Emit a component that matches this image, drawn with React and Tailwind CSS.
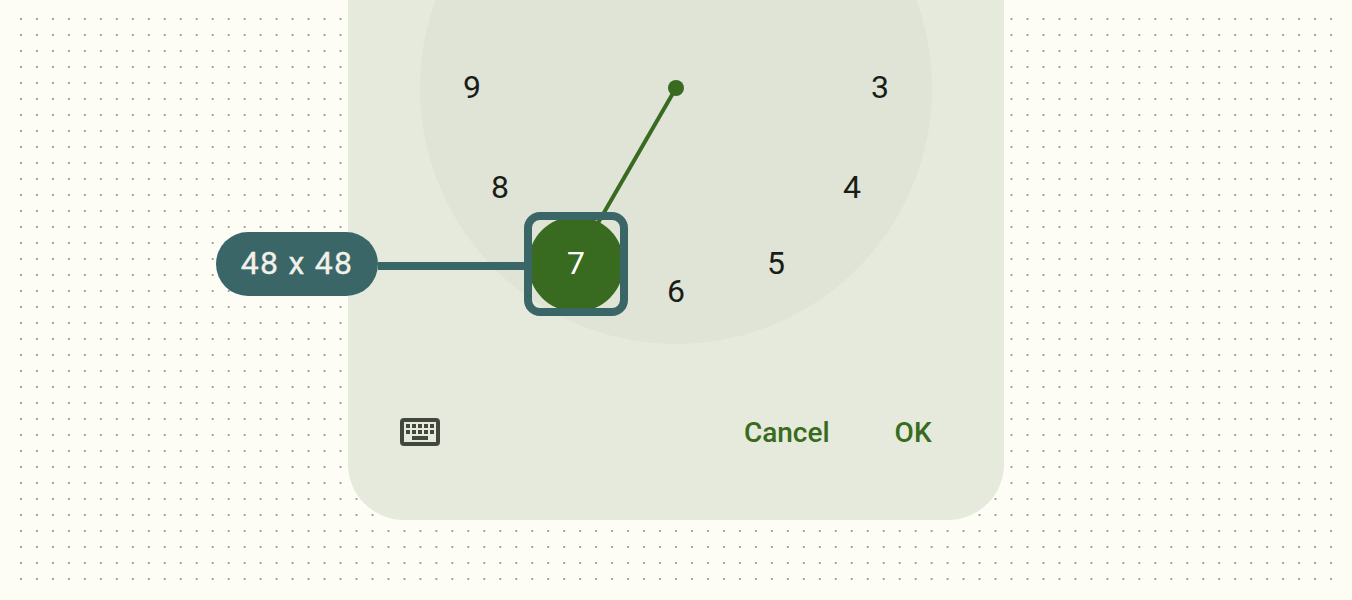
const COLUMNS = Array.from({ length: 83 }, (_, i) => 21 + i * 15.976);
const ROWS = Array.from({ length: 36 }, (_, i) => 19 + i * 16);

const HOURS = [
  { label: '9', place: 'left-[32px] top-[235px]' },
  { label: '8', place: 'left-[60px] top-[335px]' },
  { label: '6', place: 'left-[236px] top-[439px]' },
  { label: '5', place: 'left-[336px] top-[411px]' },
  { label: '4', place: 'left-[412px] top-[335px]' },
  { label: '3', place: 'left-[440px] top-[235px]' },
];

function DotGrid() {
  return (
    <svg className="absolute inset-0" width="1352" height="600" fill="#93948c" aria-hidden="true">
      {ROWS.map((y) => COLUMNS.map((x) => <circle key={`${x}-${y}`} cx={x} cy={y} r="1.08" />))}
    </svg>
  );
}

function Dial() {
  return (
    <div className="relative -mt-[168px] size-[512px] shrink-0 rounded-full bg-[#dfe4d7]">
      {HOURS.map(({ label, place }) => (
        <span
          key={label}
          className={`absolute flex h-10 w-10 items-center justify-center text-[32px] leading-10 text-[#1a1c18] ${place}`}
        >
          {label}
        </span>
      ))}
      <svg className="absolute inset-0" width="512" height="512" aria-hidden="true">
        <path d="M256 256 156 429" stroke="#386a20" strokeWidth="4" />
        <circle cx="256" cy="256" r="8" fill="#386a20" />
      </svg>
      <div className="absolute left-[108px] top-[384px] flex size-[96px] items-center justify-center rounded-full bg-[#386a20] text-[32px] leading-10 text-white">
        <span className="-mt-0.5">7</span>
      </div>
      <div className="absolute left-[104px] top-[380px] size-[104px] rounded-[16px] border-8 border-[#3a6667]" />
    </div>
  );
}

function KeyboardIcon() {
  return (
    <svg width="40" height="28" viewBox="0 0 40 28" fill="#43483e" aria-label="Keyboard">
      <path
        fillRule="evenodd"
        d="M4 0h32a4 4 0 0 1 4 4v20a4 4 0 0 1-4 4H4a4 4 0 0 1-4-4V4a4 4 0 0 1 4-4ZM4 4v20h32V4Z"
      />
      {[6, 12, 18, 24, 30].map((x) => (
        <path key={x} d={`M${x} 6h4v4h-4ZM${x} 12h4v4h-4Z`} />
      ))}
      <path d="M12 18h16v4H12Z" />
    </svg>
  );
}

export default function App() {
  return (
    <main className="relative flex h-[600px] w-[1352px] justify-center overflow-hidden bg-[#fdfdf5] font-[Roboto,sans-serif]">
      <DotGrid />
      <section className="relative flex h-[520px] w-[656px] flex-col items-center rounded-b-[56px] bg-[#e5eadc]">
        <Dial />
        <div className="mt-[56px] flex h-16 w-full items-center pl-[52px] pr-[72px]">
          <KeyboardIcon />
          <button className="ml-auto pt-0.5 text-[28px] font-medium leading-10 text-[#386a20]">Cancel</button>
          <button className="ml-[65px] pt-0.5 text-[28px] font-medium leading-10 tracking-[0.2px] text-[#386a20]">OK</button>
        </div>
      </section>
      <div className="absolute left-[216px] top-[232px] flex items-center">
        <div className="flex h-16 w-[162px] items-center justify-center rounded-full bg-[#3a6667] pb-0.5 text-[32px] leading-10 tracking-[1.25px] text-[#f2f1e9] [-webkit-text-stroke:0.35px_#f2f1e9]">
          48 x 48
        </div>
        <div className="mt-1 h-2 w-[150px] bg-[#3a6667]" />
      </div>
    </main>
  );
}
